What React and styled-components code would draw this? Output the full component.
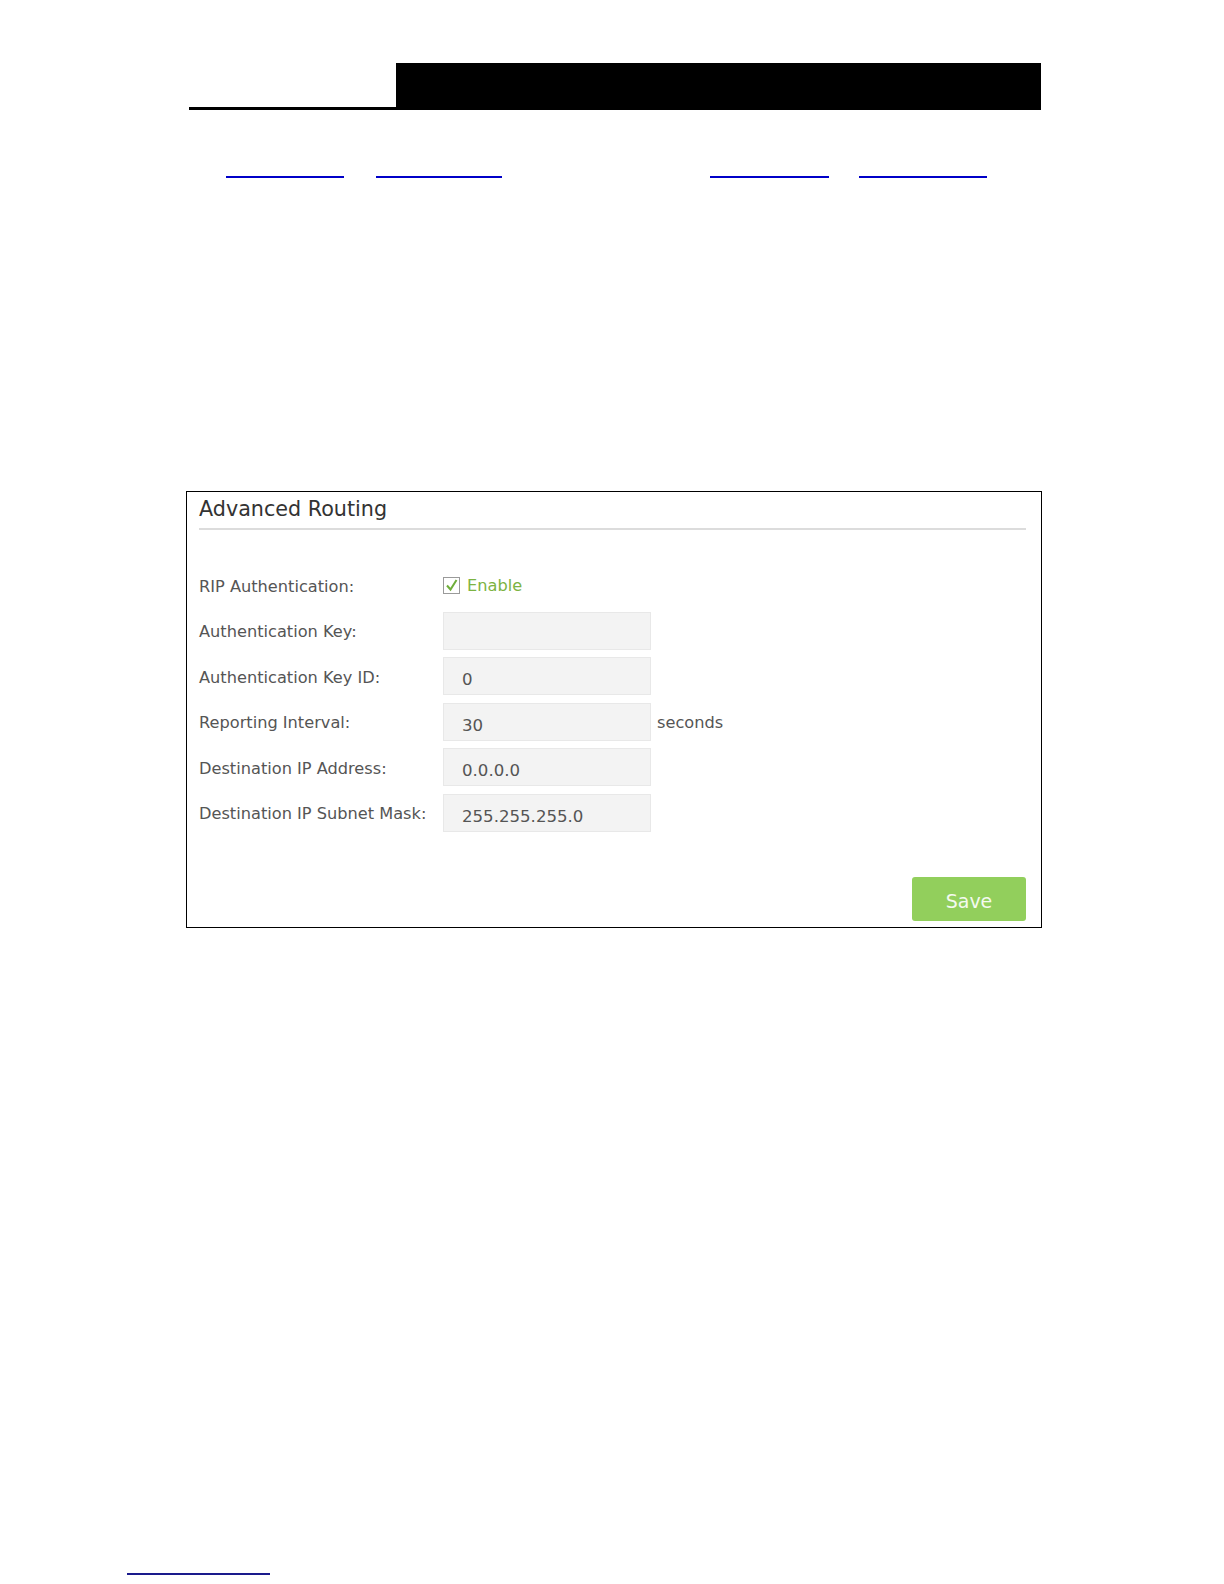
import React from 'react';
import styled, { createGlobalStyle } from 'styled-components';

const LINKS = [
  { width: 118, gap: 0 },
  { width: 126, gap: 32 },
  { width: 119, gap: 208 },
  { width: 128, gap: 30 },
];

const FIELDS = [
  { label: 'Authentication Key:', value: '' },
  { label: 'Authentication Key ID:', value: '0' },
  { label: 'Reporting Interval:', value: '30', unit: 'seconds' },
  { label: 'Destination IP Address:', value: '0.0.0.0' },
  { label: 'Destination IP Subnet Mask:', value: '255.255.255.0' },
];

const GlobalStyle = createGlobalStyle`
  html, body {
    margin: 0;
    padding: 0;
    background: #fff;
  }
  body {
    font-family: 'DejaVu Sans', Verdana, sans-serif;
  }
`;

const App = () => (
  <>
    <GlobalStyle />
    <Page>
      <Header>
        <HeaderRule />
        <HeaderBar />
      </Header>

      <LinkRow>
        {LINKS.map((link, i) => (
          <RefLink key={i} href="#" $width={link.width} $gap={link.gap} />
        ))}
      </LinkRow>

      <Panel>
        <PanelTitle>Advanced Routing</PanelTitle>
        <Form>
          <Row>
            <Label>RIP Authentication:</Label>
            <CheckLabel>
              <CheckBox>
                <svg width="13" height="13" viewBox="0 0 13 13">
                  <path d="M2 6.5 L5.5 10.5 L11.5 1" fill="none" stroke="#6fae3a" strokeWidth="2" />
                </svg>
              </CheckBox>
              Enable
            </CheckLabel>
          </Row>
          {FIELDS.map((f) => (
            <Row key={f.label}>
              <Label>{f.label}</Label>
              <Field>{f.value}</Field>
              {f.unit && <Unit>{f.unit}</Unit>}
            </Row>
          ))}
        </Form>
        <Footer>
          <SaveButton>Save</SaveButton>
        </Footer>
      </Panel>

      <BottomLink href="#" />
    </Page>
  </>
);

export default App;

// --- STYLES ---

const Page = styled.div`
  position: relative;
  width: 1224px;
  height: 1584px;
  overflow: hidden;
  padding-top: 63px;
  box-sizing: border-box;
`;

const Header = styled.div`
  display: flex;
  align-items: flex-end;
  padding-left: 189px;
`;

const HeaderRule = styled.div`
  width: 207px;
  height: 3px;
  background: #000;
`;

const HeaderBar = styled.div`
  width: 645px;
  height: 47px;
  background: #000;
`;

const LinkRow = styled.div`
  display: flex;
  padding-left: 226px;
  margin-top: 66px;
  height: 2px;
`;

const RefLink = styled.a`
  display: block;
  width: ${(p) => p.$width}px;
  margin-left: ${(p) => p.$gap}px;
  height: 2px;
  background: #0000c8;
`;

const Panel = styled.div`
  box-sizing: border-box;
  width: 856px;
  height: 437px;
  margin: 313px 0 0 186px;
  border: 1px solid #000;
  padding: 0 15px 0 12px;
  display: flex;
  flex-direction: column;
`;

const PanelTitle = styled.div`
  font-size: 20.7px;
  line-height: 25px;
  color: #333;
  padding: 5px 0 6px;
  border-bottom: 2px solid #dcdcdc;
`;

const Form = styled.div`
  display: flex;
  flex-direction: column;
  gap: 7.6px;
  margin-top: 36px;
`;

const Row = styled.div`
  display: flex;
  align-items: center;
  height: 38px;
`;

const Label = styled.div`
  width: 244px;
  flex-shrink: 0;
  font-size: 16.2px;
  padding-top: 2px;
  color: #555;
`;

const CheckLabel = styled.label`
  display: flex;
  align-items: center;
  gap: 7px;
  font-size: 16.2px;
  padding-top: 1px;
  color: #7cb342;
`;

const CheckBox = styled.span`
  box-sizing: border-box;
  width: 17px;
  height: 17px;
  border: 1px solid #9a9a9a;
  display: flex;
  align-items: center;
  justify-content: center;
  background: #fff;
`;

const Field = styled.div`
  box-sizing: border-box;
  width: 208px;
  height: 38px;
  background: #f3f3f3;
  border: 1px solid #e8e8e8;
  padding: 8px 0 0 18px;
  font-size: 16.6px;
  line-height: 28px;
  color: #555;
`;

const Unit = styled.span`
  margin-left: 6px;
  font-size: 16.2px;
  padding-top: 2px;
  color: #555;
`;

const Footer = styled.div`
  margin-top: auto;
  display: flex;
  justify-content: flex-end;
  padding-bottom: 6px;
`;

const SaveButton = styled.button`
  width: 114px;
  height: 44px;
  border: none;
  border-radius: 3px;
  background: #92cf5c;
  color: #f4faef;
  font-family: 'DejaVu Sans', Verdana, sans-serif;
  font-size: 19px;
  padding: 4px 0 0;
`;

const BottomLink = styled.a`
  position: absolute;
  left: 127px;
  top: 1573px;
  width: 143px;
  height: 2px;
  background: #1a1a8c;
`;
